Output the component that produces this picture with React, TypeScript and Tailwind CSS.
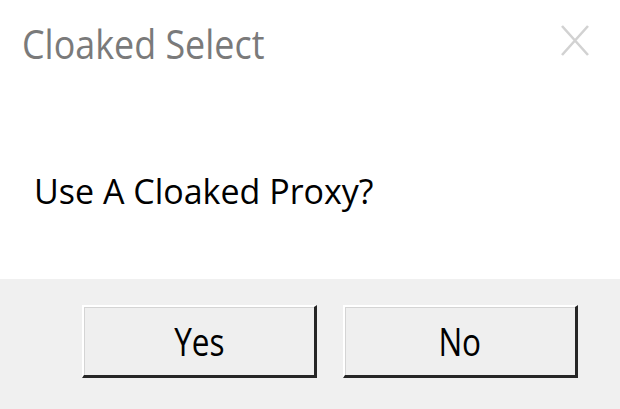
function DialogButton({ label }: { label: string }) {
  return (
    <button className="flex h-[73px] w-[235px] items-center justify-center border-t-2 border-l-2 border-t-white border-l-white border-r-[3px] border-b-[3px] border-r-[#262626] border-b-[#262626] bg-[#efefef] shadow-[inset_1px_1px_0_#d4d4d4] text-[38px] text-black">
      <span className="inline-block scale-x-[0.83]">{label}</span>
    </button>
  );
}

export default function App() {
  return (
    <div className="flex h-[409px] w-[620px] flex-col overflow-hidden bg-white font-['Open_Sans',sans-serif]">
      {/* Title + message */}
      <div className="flex h-[279px] flex-col bg-white">
        <div className="flex items-start justify-between pl-[22px] pr-[31px] pt-[18px]">
          <h1 className="origin-left scale-x-[0.875] text-[41px] leading-[50px] text-[#7a7a7a]">
            Cloaked Select
          </h1>
          <svg className="mt-[7px]" width="28" height="31" viewBox="0 0 28 31" fill="none">
            <path d="M1 1 L27 30 M27 1 L1 30" stroke="#d2d2d2" strokeWidth="2.6" />
          </svg>
        </div>
        <p className="ml-[34px] mt-[102px] text-[34px] leading-[42px] text-black">
          Use A Cloaked Proxy?
        </p>
      </div>

      {/* Buttons */}
      <div className="flex flex-1 items-start justify-end gap-[26px] bg-[#f0f0f0] pr-[42px] pt-[26px]">
        <DialogButton label="Yes" />
        <DialogButton label="No" />
      </div>
    </div>
  );
}
